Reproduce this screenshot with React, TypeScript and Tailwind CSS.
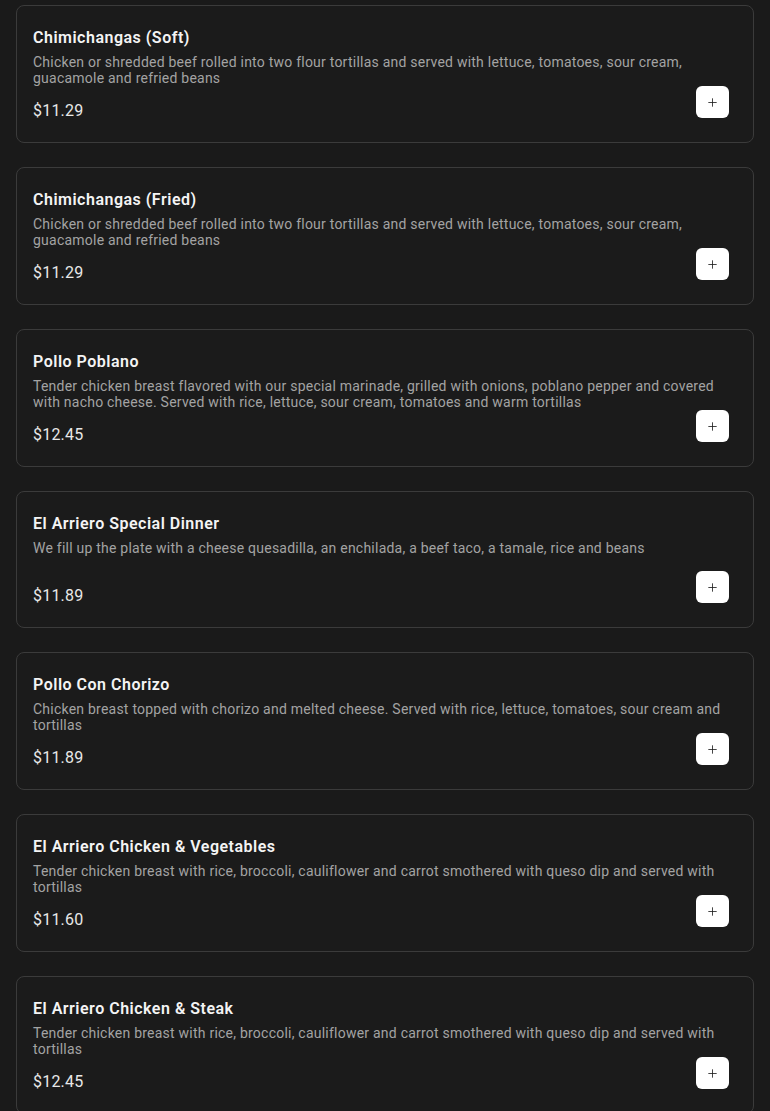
import { Plus } from 'lucide-react';

const items = [
  {
    name: 'Chimichangas (Soft)',
    description:
      'Chicken or shredded beef rolled into two flour tortillas and served with lettuce, tomatoes, sour cream, guacamole and refried beans',
    price: '$11.29',
  },
  {
    name: 'Chimichangas (Fried)',
    description:
      'Chicken or shredded beef rolled into two flour tortillas and served with lettuce, tomatoes, sour cream, guacamole and refried beans',
    price: '$11.29',
  },
  {
    name: 'Pollo Poblano',
    description:
      'Tender chicken breast flavored with our special marinade, grilled with onions, poblano pepper and covered with nacho cheese. Served with rice, lettuce, sour cream, tomatoes and warm tortillas',
    price: '$12.45',
  },
  {
    name: 'El Arriero Special Dinner',
    description:
      'We fill up the plate with a cheese quesadilla, an enchilada, a beef taco, a tamale, rice and beans',
    price: '$11.89',
  },
  {
    name: 'Pollo Con Chorizo',
    description:
      'Chicken breast topped with chorizo and melted cheese. Served with rice, lettuce, tomatoes, sour cream and tortillas',
    price: '$11.89',
  },
  {
    name: 'El Arriero Chicken & Vegetables',
    description:
      'Tender chicken breast with rice, broccoli, cauliflower and carrot smothered with queso dip and served with tortillas',
    price: '$11.60',
  },
  {
    name: 'El Arriero Chicken & Steak',
    description:
      'Tender chicken breast with rice, broccoli, cauliflower and carrot smothered with queso dip and served with tortillas',
    price: '$12.45',
  },
];

export default function App() {
  return (
    <div className="min-h-screen bg-[#1a1a1a] px-4 pt-[5px] pb-6 font-['Roboto',sans-serif]">
      <div className="flex flex-col gap-6">
        {items.map((item) => (
          <div
            key={item.name}
            className="rounded-lg border border-[#3b3b3b] bg-[#1b1b1b] px-4 pt-5 pb-5"
          >
            <h3 className="text-base leading-6 font-semibold tracking-[0.5px] text-[#f4f4f4]">
              {item.name}
            </h3>
            <p className="mt-1 min-h-[31px] text-sm leading-4 tracking-[0.23px] text-[#a3a3a3]">
              {item.description}
            </p>
            <div className="flex items-end justify-between">
              <p className="-mb-px text-base leading-6 tracking-[0.2px] text-[#e8e8e8]">
                {item.price}
              </p>
              <button className="mr-2 mb-1 flex h-8 w-[33px] items-center justify-center rounded-md bg-white text-[#1a1a1a]">
                <Plus size={13} strokeWidth={1.5} />
              </button>
            </div>
          </div>
        ))}
      </div>
    </div>
  );
}
